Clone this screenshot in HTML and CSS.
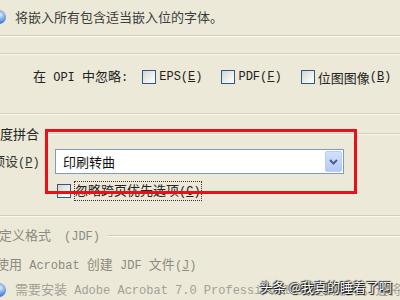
FILE: index.html
```html
<!DOCTYPE html>
<html>
<head>
<meta charset="utf-8">
<link rel="stylesheet" href="styles.css">
</head>
<body>
<div class="page">
  <div class="row note-top">
    <span class="orb"></span>
    <span class="note-text">将嵌入所有包含适当嵌入位的字体。</span>
  </div>
  <div class="groove g1"></div>
  <div class="groove g2"></div>

  <div class="row opi">
    <span class="opi-label">在<span class="en"> OPI </span>中忽略<span class="en">:</span></span>
    <label class="chk-item"><span class="chk"></span><span class="en">EPS(<u>E</u>)</span></label>
    <label class="chk-item"><span class="chk"></span><span class="en">PDF(<u>F</u>)</span></label>
    <label class="chk-item"><span class="chk"></span>位图图像<span class="en">(<u>B</u>)</span></label>
  </div>
  <div class="groove g3"></div>

  <div class="row group-title">
    <span class="gt-text">度拼合</span>
    <span class="gline"></span>
  </div>

  <div class="row preset">
    <span class="preset-label">预设<span class="en">(<u>P</u>)</span></span>
    <div class="select">
      <span class="select-text">印刷转曲</span>
      <span class="select-btn">
        <svg width="9" height="6" viewBox="0 0 9 6"><path d="M1 1 L4.5 4.5 L8 1" fill="none" stroke="#4d6185" stroke-width="2"/></svg>
      </span>
    </div>
  </div>

  <div class="row spread">
    <span class="chk"></span>
    <span class="focus">忽略跨页优先选项<span class="en">(<u>C</u>)</span></span>
  </div>

  <div class="groove g4"></div>

  <div class="row group-title jdf-title">
    <span class="gt-text dis">定义格式　<span class="en">(JDF)</span></span>
    <span class="gline"></span>
  </div>

  <div class="row acro dis">
    <span class="acro-text">使用<span class="en"> Acrobat </span>创建<span class="en"> JDF </span>文件<span class="en">(<u>J</u>)</span></span>
  </div>

  <div class="row note-bottom">
    <span class="orb"></span>
    <span class="note-text light">需要安装<span class="en"> Adobe Acrobat 7.0 Professional </span>或更高版本。这将</span>
  </div>

  <div class="redbox"></div>
  <div class="watermark">头条 @我真的睡着了啊</div>
</div>
</body>
</html>
```

FILE: styles.css
```css
html, body {
  margin: 0;
  padding: 0;
}
body {
  background: #ECE9D8;
  font-family: "Noto Sans CJK SC", sans-serif;
  font-size: 13px;
  color: #222;
  width: 400px;
  height: 300px;
  overflow: hidden;
}
.page {
  position: relative;
  width: 400px;
  height: 300px;
  overflow: hidden;
  display: flex;
  flex-direction: column;
}
.en {
  font-family: "Liberation Mono", monospace;
  font-size: 12px;
}
u { text-decoration: underline; }
.row {
  display: flex;
  align-items: center;
  white-space: nowrap;
  line-height: 15px;
}
.groove {
  height: 0;
  border-top: 1px solid #D2CEBD;
  border-bottom: 1px solid #F8F7F1;
  flex: none;
}
.g1 { margin-top: 2px; }
.g2 { margin-top: 16px; }
.g3 { margin-top: 14px; }
.g4 { margin-top: 17px; }

.orb {
  width: 14px;
  height: 14px;
  border-radius: 50%;
  flex: none;
  margin-left: -8px;
  background: radial-gradient(circle at 60% 35%, #e4efff 0, #8fb6f0 30%, #2f6ad3 75%, #1d4fa8 100%);
}
.note-top {
  height: 33px;
}
.note-text {
  margin-left: 9px;
  color: #3c3c3c;
}
.note-text.light { color: #a3a196; }

.opi {
  height: 44px;
  padding-left: 33px;
}
.opi-label { margin-right: 14px; }
.chk-item {
  display: flex;
  align-items: center;
  margin-right: 19px;
}
.chk {
  width: 14px;
  height: 14px;
  box-sizing: border-box;
  border: 1px solid #2a5b8a;
  background: linear-gradient(135deg, #d4d3cc 0%, #eeeee9 55%, #ffffff 100%);
  flex: none;
  margin-right: 3px;
}

.group-title {
  height: 19px;
  margin-top: 9px;
}
.gt-text { flex: none; }
.gline {
  flex: 1;
  height: 0;
  margin-left: 6px;
  border-top: 1px solid #D2CEBD;
  border-bottom: 1px solid #F8F7F1;
}

.preset {
  height: 25px;
  margin-top: 6px;
}
.preset-label {
  width: 63px;
  margin-left: -8px;
  flex: none;
  color: #333;
}
.select {
  width: 289px;
  height: 25px;
  box-sizing: border-box;
  border: 1px solid #7F9DB9;
  background: #fff;
  display: flex;
  align-items: center;
  justify-content: space-between;
  padding: 1px;
}
.select-text {
  margin-left: 6px;
  color: #111;
}
.select-btn {
  width: 17px;
  height: 21px;
  box-sizing: border-box;
  border: 1px solid #B9CDF4;
  background: linear-gradient(180deg, #d2e0fc 0%, #c1d3fb 60%, #b4c9f6 100%);
  border-radius: 2px;
  display: flex;
  align-items: center;
  justify-content: center;
}

.spread {
  height: 15px;
  margin-top: 9px;
  padding-left: 57px;
}
.spread .chk { margin-right: 4px; }
.focus {
  outline: 1px dotted #333;
  outline-offset: 0;
}

.jdf-title {
  height: 15px;
  margin-top: 11px;
}
.jdf-title .gt-text { margin-left: -1px; }
.jdf-title .gline { margin-left: 7px; }
.dis { color: #8d8b81; }

.acro {
  height: 15px;
  margin-top: 14px;
}
.acro-text { margin-left: -4px; }

.note-bottom {
  height: 15px;
  margin-top: 10px;
}

.redbox {
  position: absolute;
  left: 45px;
  top: 129px;
  width: 312px;
  height: 65px;
  box-sizing: border-box;
  border: 3px solid #E8101A;
}
.watermark {
  position: absolute;
  right: 8px;
  top: 279px;
  color: #fff;
  font-size: 13px;
  line-height: 15px;
  text-shadow: 0 0 1px #000, 1px 1px 1px #000, -1px -1px 1px #333;
  white-space: nowrap;
}
```
